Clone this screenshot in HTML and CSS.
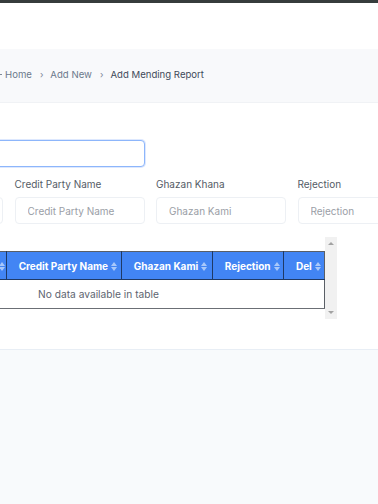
FILE: index.html
```html
<!DOCTYPE html>
<html lang="en">
<head>
    <meta charset="UTF-8">
    <meta name="viewport" content="width=device-width, initial-scale=1.0">
    <title>Add Mending Report</title>
    <link rel="stylesheet" href="styles.css">
</head>
<body>
    <div class="topbar"></div>
    <header class="navbar"></header>

    <!-- breadcrumb -->
    <div class="page-header">
        <ul class="breadcrumb">
            <li class="crumb-tail"></li>
            <li><a href="#">Home</a></li>
            <li class="sep">›</li>
            <li><a href="#">Add New</a></li>
            <li class="sep">›</li>
            <li class="active">Add Mending Report</li>
        </ul>
    </div>

    <div class="content">
        <div class="form-grid">
            <div class="field wide">
                <input class="form-control focused" type="text">
            </div>
        </div>

        <div class="form-grid">
            <div class="field">
                <label>&nbsp;</label>
                <input class="form-control" type="text">
            </div>
            <div class="field">
                <label>Credit Party Name</label>
                <input class="form-control" type="text" placeholder="Credit Party Name">
            </div>
            <div class="field">
                <label>Ghazan Khana</label>
                <input class="form-control" type="text" placeholder="Ghazan Kami">
            </div>
            <div class="field">
                <label>Rejection</label>
                <input class="form-control" type="text" placeholder="Rejection">
            </div>
        </div>

        <div class="table-scroll">
            <div class="table-area">
                <table class="data-table">
                    <thead>
                        <tr>
                            <th class="c1"></th>
                            <th class="c2"><span class="sort"></span></th>
                            <th class="c3">Credit Party Name<span class="sort"></span></th>
                            <th class="c4">Ghazan Kami<span class="sort"></span></th>
                            <th class="c5">Rejection<span class="sort"></span></th>
                            <th class="c6">Del<span class="sort"></span></th>
                        </tr>
                    </thead>
                    <tbody>
                        <tr>
                            <td colspan="6" class="empty">No data available in table</td>
                        </tr>
                    </tbody>
                </table>
            </div>
            <div class="scrollbar">
                <span class="arrow up"></span>
                <span class="arrow down"></span>
            </div>
        </div>
    </div>

    <footer class="footer"></footer>
</body>
</html>
```

FILE: styles.css
```css
html, body {
    margin: 0;
    padding: 0;
}
body {
    font-family: 'Inter', 'Open Sans', Arial, sans-serif;
    background-color: #ffffff;
    width: 378px;
    overflow: hidden;
}
.topbar {
    height: 3px;
    background: #363c3c;
}
.navbar {
    height: 46px;
    background: #ffffff;
}

/* breadcrumb */
.page-header {
    height: 53px;
    background: #f8f9fb;
    border-bottom: 1px solid #f0f2f5;
    display: flex;
    align-items: center;
}
.breadcrumb {
    list-style: none;
    margin: 0;
    padding: 0;
    display: flex;
    align-items: center;
    font-size: 9.6px;
    margin-top: -3px;
}
.breadcrumb li {
    color: #6c7a8c;
}
.breadcrumb a {
    color: #6c7a8c;
    text-decoration: none;
}
.breadcrumb .crumb-tail {
    width: 2px;
    height: 1px;
    background: #7d8a99;
    margin-right: 3px;
}
.breadcrumb .sep {
    font-size: 9px;
    margin: 0 7px 0 8px;
    color: #7a8594;
}
.breadcrumb .active {
    color: #3f4a5a;
}

/* form */
.content {
    margin-left: -127px;
    padding-top: 37px;
    height: 209px;
}
.form-grid {
    display: grid;
    grid-template-columns: repeat(4, 130px);
    column-gap: 11.5px;
    margin-bottom: 11px;
}
.field.wide {
    grid-column: span 2;
}
.field label {
    display: block;
    font-size: 10px;
    color: #555c66;
    margin-bottom: 6px;
    line-height: 13px;
}
.form-control {
    box-sizing: border-box;
    display: block;
    width: 100%;
    height: 27px;
    border: 1px solid #edf0f4;
    border-radius: 4px;
    padding: 0 12px;
    font-family: inherit;
    font-size: 10px;
    color: #333;
    background: #fff;
    outline: none;
}
.form-control::placeholder {
    color: #9a9ea6;
}
.form-control.focused {
    border: 1px solid #8db6fb;
    box-shadow: 0 0 0 1px rgba(120, 165, 250, 0.25);
}

/* table */
.table-scroll {
    display: flex;
    margin-top: 13px;
}
.table-area {
    flex-shrink: 0;
    width: 452px;
    padding-top: 14px;
    height: 68px;
}
.data-table {
    border-collapse: collapse;
    table-layout: fixed;
    width: 452px;
    border: 1px solid #5a5f66;
    border-left: none;
}
.data-table th {
    box-sizing: border-box;
    background: #4285f4;
    color: #ffffff;
    font-size: 10px;
    font-weight: 700;
    height: 28px;
    padding: 0 3px 0 12px;
    text-align: left;
    white-space: nowrap;
    overflow: hidden;
    border-left: 1px solid #1f3a66;
    border-bottom: 1px solid #1f3a66;
}
.data-table th:first-child {
    border-left: none;
}
.data-table th.c2 {
    text-align: right;
    padding-right: 1px;
}
.data-table .c1 { width: 40px; }
.data-table .c2 { width: 93px; }
.data-table .c3 { width: 115px; }
.data-table .c4 { width: 91px; }
.data-table .c5 { width: 71px; }
.data-table .c6 { width: 41px; }
.sort {
    display: inline-block;
    width: 6px;
    height: 9px;
    margin-left: 3px;
    vertical-align: -1px;
    position: relative;
}
.sort::before,
.sort::after {
    content: '';
    position: absolute;
    left: 0;
    border-left: 3px solid transparent;
    border-right: 3px solid transparent;
}
.sort::before {
    top: 0;
    border-bottom: 4px solid rgba(255, 255, 255, 0.55);
}
.sort::after {
    bottom: 0;
    border-top: 4px solid rgba(255, 255, 255, 0.55);
}
.data-table td.empty {
    height: 26px;
    text-align: center;
    font-size: 10.2px;
    color: #5d6470;
    border-bottom: 1px solid #6b6f75;
}

/* fake scrollbar */
.scrollbar {
    flex-shrink: 0;
    width: 12px;
    height: 82px;
    background: #f1f1f1;
    display: flex;
    flex-direction: column;
    justify-content: space-between;
    align-items: center;
    padding: 5px 0;
    box-sizing: border-box;
}
.arrow {
    width: 0;
    height: 0;
    border-left: 3px solid transparent;
    border-right: 3px solid transparent;
}
.arrow.up {
    border-bottom: 3px solid #a3a3a3;
}
.arrow.down {
    border-top: 3px solid #a3a3a3;
}

.footer {
    height: 160px;
    background: #f8fafc;
    border-top: 1px solid #e8eef5;
}
```
